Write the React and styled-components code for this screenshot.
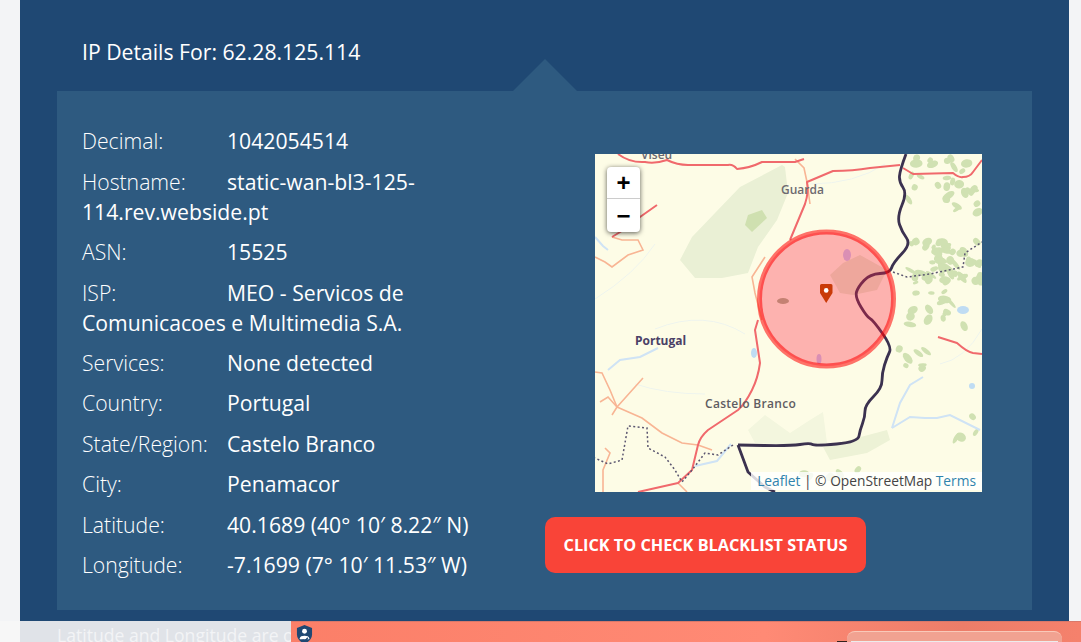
import React from 'react';
import styled, { createGlobalStyle } from 'styled-components';

const details = [
  { label: 'Decimal:', value: '1042054514' },
  { label: 'Hostname:', value: 'static-wan-bl3-125-114.rev.webside.pt' },
  { label: 'ASN:', value: '15525' },
  { label: 'ISP:', value: 'MEO - Servicos de Comunicacoes e Multimedia S.A.' },
  { label: 'Services:', value: 'None detected' },
  { label: 'Country:', value: 'Portugal' },
  { label: 'State/Region:', value: 'Castelo Branco' },
  { label: 'City:', value: 'Penamacor' },
  { label: 'Latitude:', value: '40.1689 (40° 10′ 8.22″ N)' },
  { label: 'Longitude:', value: '-7.1699 (7° 10′ 11.53″ W)' },
];

const redRoads = [
  'M23 0 Q35 9 50 8 Q60 10 72 6 Q82 11 93 11 L133 11 Q138 10 142 15 Q155 14 167 8 L200 8 L209 5',
  'M195 86 L210 50 Q214 38 212 28 L238 17 Q258 17 275 14 L305 11',
  'M308 14 L318 20 L358 19 Q364 24 368 23 Q375 23 378 18 L387 6',
  'M62 51 L45 63 L30 75 L17 83',
  'M163 166 L160 176 L165 209 Q163 224 157 236 Q150 250 143 256 L113 276 Q105 283 103 291 L97 316 L83 329 L43 338',
  'M343 183 L362 189 Q372 198 378 199 L387 200',
];

const orangeRoads = [
  'M17 83 L27 86 L43 86 L48 96 L33 101 L17 113 L10 108 L0 103',
  'M170 103 L157 123 L160 139 L167 166',
  'M200 5 L209 14 L212 28 L215 50',
  'M0 218 L7 219 L15 236 L22 253 L48 224',
  'M22 253 L47 264 L67 279 L87 289 L103 291 L117 296',
  'M5 248 L13 243 L22 253 L17 261',
  'M10 294 L15 299 L8 316 L8 338',
  'M83 329 L92 338',
];

const riverLines = [
  'M297 274 L315 263 L330 264 L342 264 L355 261 L385 276',
  'M297 274 L305 249 L315 231 L328 223',
  'M13 216 L25 206 L45 203 L63 194',
  'M0 83 L8 92 L13 96',
  'M136 290 L122 307 L100 312',
];

const faintRivers = [
  'M0 145 Q40 120 60 90',
  'M60 175 Q110 155 150 180',
  'M215 30 Q260 30 290 10',
  'M345 210 Q370 205 387 175',
  'M40 230 Q70 240 110 240',
];

const parks = [
  { id: 'estrela', points: '190,13 193,39 182,66 163,93 153,119 127,124 100,124 85,106 97,83 120,59 145,33 187,11', fill: '#eaf0d5' },
  { id: 'malcata', points: '235,121 248,109 265,101 292,116 282,136 258,141 245,139', fill: '#e6ecca' },
  { id: 'tejo', points: '153,276 170,261 195,279 215,266 228,258 232,289 200,291 160,289', fill: '#f3f6de' },
  { id: 'tejo-south', points: '228,293 292,276 295,286 272,299 235,306', fill: '#edf2d6' },
];

// [centre x, centre y, spread x, spread y, number of small patches]
const forestClusters = [
  [340, 30, 32, 26, 24],
  [350, 108, 36, 22, 58],
  [340, 155, 30, 18, 16],
  [378, 52, 8, 20, 5],
  [318, 215, 14, 22, 7],
  [372, 270, 14, 18, 4],
  [237, 318, 30, 8, 6],
];

const jitter = (seed) => {
  const n = Math.sin(seed * 91.7) * 4375.5;
  return (n - Math.floor(n)) * 2 - 1;
};

const forestPatches = forestClusters.flatMap(([cx, cy, sx, sy, count], c) =>
  Array.from({ length: count }, (_, i) => {
    const seed = c * 70 + i + 1;
    return {
      id: seed,
      x: cx + jitter(seed) * sx,
      y: cy + jitter(seed + 0.37) * sy,
      rx: 2 + Math.abs(jitter(seed + 0.61)) * 5,
      ry: 1.5 + Math.abs(jitter(seed + 0.83)) * 3,
      rot: jitter(seed + 0.19) * 70,
    };
  }),
);

// rounds the corners of a polyline, the way the blurred tile border looks
const smoothLine = (pts) => {
  let d = `M${pts[0][0]} ${pts[0][1]}`;
  for (let i = 1; i < pts.length - 1; i += 1) {
    const [x, y] = pts[i];
    const mx = (x + pts[i + 1][0]) / 2;
    const my = (y + pts[i + 1][1]) / 2;
    d += ` Q${x} ${y} ${mx} ${my}`;
  }
  const last = pts[pts.length - 1];
  return `${d} L${last[0]} ${last[1]}`;
};

const borderLine = smoothLine([
  [311, 0], [305, 16], [304, 28], [312, 39], [302, 63], [307, 78], [316, 90], [298, 109], [295, 119],
  [275, 120], [263, 133], [260, 143], [272, 163], [278, 166], [297, 193], [292, 203], [287, 219],
  [287, 234], [270, 251], [270, 263], [265, 276], [263, 288], [220, 292], [215, 289], [195, 292],
  [143, 291],
]);

const Marker = () => (
  <g transform="translate(225 130)">
    <path d="M1.5 0 H11 a1.5 1.5 0 0 1 1.5 1.5 V9 L6.2 19 L0 9 V1.5 A1.5 1.5 0 0 1 1.5 0 Z" fill="#c93a08" />
    <circle cx="6.2" cy="6.4" r="2.3" fill="#fff" />
  </g>
);

const MapDrawing = () => (
  <MapSvg viewBox="0 0 387 338">
    <defs>
      <filter id="tile">
        <feGaussianBlur stdDeviation="0.55" />
      </filter>
    </defs>
    <g filter="url(#tile)">
      {faintRivers.map((d) => (
        <path key={d} d={d} fill="none" stroke="#eef4ee" strokeWidth="1" />
      ))}
      {parks.map((park) => (
        <polygon key={park.id} points={park.points} fill={park.fill} />
      ))}
      <polygon points="167,56 172,64 157,78 150,71 153,61" fill="#cfe0b0" />
      <ellipse cx="188" cy="147" rx="6" ry="3" fill="#a8b48c" />
      {forestPatches.map((p) => (
        <ellipse
          key={p.id}
          cx={p.x}
          cy={p.y}
          rx={p.rx}
          ry={p.ry}
          transform={`rotate(${p.rot} ${p.x} ${p.y})`}
          fill="#d0e1b2"
        />
      ))}
      {riverLines.map((d) => (
        <path key={d} d={d} fill="none" stroke="#cfe3f5" strokeWidth="2" />
      ))}
      <ellipse cx="368" cy="156" rx="6" ry="4" fill="#bfdcf3" />
      <ellipse cx="159" cy="199" rx="3" ry="5" fill="#bfdcf3" />
      <ellipse cx="377" cy="232" rx="3" ry="3" fill="#bfdcf3" />
      <ellipse cx="252" cy="101" rx="4" ry="6" fill="#c8c8ee" />
      <ellipse cx="224" cy="205" rx="2.5" ry="5" fill="#c8c8ee" />
      {orangeRoads.map((d) => (
        <path key={d} d={d} fill="none" stroke="#f8b594" strokeWidth="1.6" />
      ))}
      {redRoads.map((d) => (
        <path key={d} d={d} fill="none" stroke="#f0696c" strokeWidth="2" strokeLinejoin="round" />
      ))}
      <path
        d="M138 291 L123 301 L110 299 L97 316 L87 328 L80 316 L70 303 L53 294 L52 274 L33 272 L27 306 L13 310 L0 304"
        fill="none"
        stroke="#5b5670"
        strokeWidth="1.5"
        strokeDasharray="2 2.4"
      />
      <path
        d="M298 118 L312 123 L335 120 L368 113 L370 99 L387 88"
        fill="none"
        stroke="#5b5670"
        strokeWidth="1.5"
        strokeDasharray="2 2.4"
      />
      <path d={borderLine} fill="none" stroke="#3b3050" strokeWidth="2.8" strokeLinejoin="round" />
      <path d="M143 291 L153 318 L170 333 L180 338" fill="none" stroke="#3b3050" strokeWidth="2.8" />
    </g>
    <MapLabel x="46" y="5" fill="#6d6a70">Viseu</MapLabel>
    <MapLabel x="186" y="40" fill="#6d6a70">Guarda</MapLabel>
    <MapLabel x="40" y="191" fill="#4a4066" $bold>Portugal</MapLabel>
    <MapLabel x="110" y="254" fill="#5f5c62" letterSpacing="0.3">Castelo Branco</MapLabel>
    <circle cx="231.5" cy="145" r="67" fill="#ff1a40" fillOpacity="0.33" stroke="#ff0000" strokeOpacity="0.55" strokeWidth="5" />
    <Marker />
  </MapSvg>
);

const App = () => (
  <>
    <GlobalStyle />
    <Page>
      <Panel>
        <Heading>IP Details For: 62.28.125.114</Heading>
        <Card>
          <DetailList>
            {details.map((item) => (
              <Row key={item.label}>
                <Label>{item.label}</Label>
                {item.value}
              </Row>
            ))}
          </DetailList>
          <SideColumn>
            <MapBox>
              <MapDrawing />
              <ZoomControl>
                <ZoomButton>+</ZoomButton>
                <ZoomButton>−</ZoomButton>
              </ZoomControl>
              <Attribution>
                <a>Leaflet</a> | © OpenStreetMap <a>Terms</a>
              </Attribution>
            </MapBox>
            <CheckButton>Click to check blacklist status</CheckButton>
          </SideColumn>
        </Card>
      </Panel>
      <BottomStrip>
        <Note>Latitude and Longitude are often near the center of population.</Note>
        <Promo>
          <ShieldIcon viewBox="0 0 18 20">
            <path d="M9 0 L17 3 V10 C17 15 13 18 9 20 C5 18 1 15 1 10 V3 Z" fill="#1f4873" />
            <circle cx="9" cy="6.5" r="2.6" fill="#fff" />
            <path d="M4 14 C4 10.5 14 10.5 14 14 V15 H4 Z" fill="#fff" />
            <path d="M7 15.5 L9 17.3 L12.5 13.5" fill="none" stroke="#1f4873" strokeWidth="1.4" />
          </ShieldIcon>
          <PromoWindow>
            <PromoWindowBar />
          </PromoWindow>
        </Promo>
      </BottomStrip>
    </Page>
  </>
);

// Styles
const GlobalStyle = createGlobalStyle`
  html, body {
    margin: 0;
    padding: 0;
    background: #f3f4f6;
  }
  body {
    font-family: "Open Sans", "Noto Sans", sans-serif;
    overflow: hidden;
  }
`;

const Page = styled.div`
  width: 1081px;
  height: 642px;
  overflow: hidden;
  display: flex;
  flex-direction: column;
`;

const Panel = styled.section`
  height: 621px;
  margin: 0 12px 0 20px;
  padding: 0 37px;
  box-sizing: border-box;
  background: #1f4873;
  color: #fff;
  flex-shrink: 0;
`;

const Heading = styled.h2`
  margin: 0;
  height: 91px;
  padding: 37px 0 0 25px;
  box-sizing: border-box;
  font-size: 21.2px;
  line-height: 30px;
  font-weight: 400;
`;

const Card = styled.div`
  position: relative;
  height: 519px;
  padding: 35.4px 0 0 25px;
  box-sizing: border-box;
  background: #2e5a80;
  display: flex;

  &::before {
    content: '';
    position: absolute;
    top: -32px;
    left: 456px;
    border-left: 32px solid transparent;
    border-right: 32px solid transparent;
    border-bottom: 32px solid #2e5a80;
  }
`;

const DetailList = styled.div`
  width: 438px;
  flex-shrink: 0;
`;

const Row = styled.div`
  font-size: 21.2px;
  line-height: 30px;
  margin-bottom: 10.4px;
`;

const Label = styled.span`
  display: inline-block;
  width: 145px;
  font-weight: 300;
`;

const SideColumn = styled.div`
  display: flex;
  flex-direction: column;
  align-items: flex-start;
  padding-top: 27.6px;
  margin-left: 25px;
`;

const MapBox = styled.div`
  position: relative;
  width: 387px;
  height: 338px;
  margin-left: 50px;
  overflow: hidden;
  background: #fdfce6;
`;

const MapSvg = styled.svg`
  display: block;
  width: 387px;
  height: 338px;
`;

const MapLabel = styled.text`
  font-family: "Open Sans", sans-serif;
  font-size: 12px;
  font-weight: ${(props) => (props.$bold ? 700 : 600)};
`;

const ZoomControl = styled.div`
  position: absolute;
  top: 13px;
  left: 12px;
  width: 33px;
  border-radius: 4px;
  background: #fff;
  box-shadow: 0 1px 5px rgba(0, 0, 0, 0.65);
  display: flex;
  flex-direction: column;
`;

const ZoomButton = styled.div`
  height: 32.5px;
  display: flex;
  align-items: center;
  justify-content: center;
  font-family: "Liberation Sans", sans-serif;
  font-size: 24px;
  font-weight: 700;
  color: #000;

  &:first-child {
    border-bottom: 1px solid #ccc;
    box-sizing: border-box;
  }
`;

const Attribution = styled.div`
  position: absolute;
  right: 0;
  bottom: 2px;
  padding: 0 6px;
  font-size: 13.75px;
  line-height: 18px;
  color: #444;
  background: rgba(255, 255, 255, 0.8);
  white-space: nowrap;

  a {
    color: #2f83ad;
  }
`;

const CheckButton = styled.button`
  margin-top: 25px;
  width: 321px;
  height: 56px;
  padding: 1px 0 0;
  border: 0;
  border-radius: 10px;
  background: #f94438;
  color: #fff;
  font-family: inherit;
  font-size: 16.25px;
  font-weight: 700;
  text-transform: uppercase;
`;

const BottomStrip = styled.div`
  flex: 1;
  display: flex;
  background: #f7f7f7;
  padding-left: 20px;
`;

const Note = styled.div`
  width: 271px;
  height: 21px;
  flex-shrink: 0;
  padding-left: 37px;
  box-sizing: border-box;
  overflow: hidden;
  white-space: nowrap;
  background: #e0e3e8;
  color: #f3f4f6;
  font-size: 17.6px;
  line-height: 28px;
`;

const Promo = styled.div`
  flex: 1;
  display: flex;
  justify-content: space-between;
  align-items: flex-start;
  padding: 3px 19px 0 5px;
  border-top: 1px solid #d9786a;
  box-sizing: border-box;
  background: linear-gradient(90deg, #fb7f68 0%, #ff8a75 60%, #ec7d69 85%, #f5816c 100%);
`;

const ShieldIcon = styled.svg`
  width: 17px;
  height: 19px;
  flex-shrink: 0;
`;

const PromoWindow = styled.div`
  position: relative;
  width: 215px;
  height: 30px;
  margin-top: 6px;
  padding: 9px 4px 0;
  box-sizing: border-box;
  border-radius: 8px 8px 0 0;
  border-top: 1px solid #f9c9b9;
  background: #f1a291;

  &::before {
    content: '';
    position: absolute;
    left: -10px;
    top: 9px;
    width: 10px;
    height: 2px;
    background: #33211d;
  }
`;

const PromoWindowBar = styled.div`
  height: 10px;
  background: #ececec;
`;

export default App;
